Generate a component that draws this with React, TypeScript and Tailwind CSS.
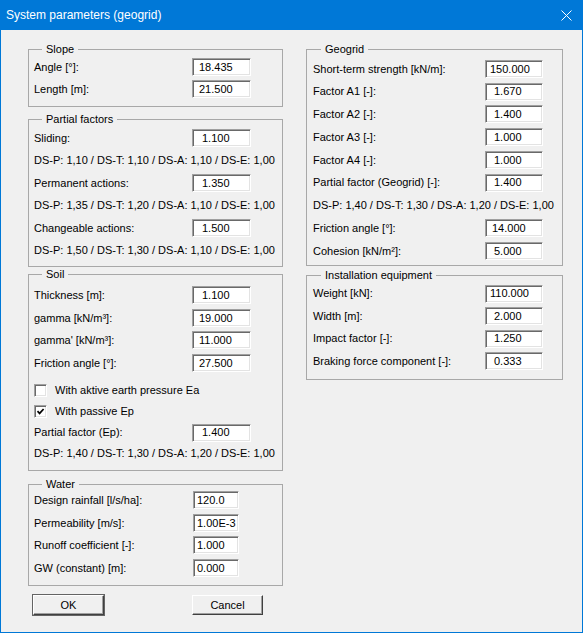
import type { ReactNode } from "react";

type RowProps = {
  label: string;
  value: string;
  pad: string;
  labelW: string;
  inputW: string;
  h?: string;
};

function Edit({ value, pad, inputW }: { value: string; pad: string; inputW: string }) {
  return (
    <div
      className={`flex h-[18px] items-center whitespace-pre border border-t-[#a0a0a0] border-l-[#a0a0a0] border-r-white border-b-white bg-white shadow-[inset_1px_1px_0_#696969,inset_-1px_-1px_0_#e3e3e3] ${inputW} ${pad}`}
    >
      {value}
    </div>
  );
}

function Row({ label, value, pad, labelW, inputW, h = "h-[22.5px]" }: RowProps) {
  return (
    <div className={`flex items-center ${h}`}>
      <span className={`shrink-0 whitespace-nowrap ${labelW}`}>{label}</span>
      <Edit value={value} pad={pad} inputW={inputW} />
    </div>
  );
}

function Note({ children, h = "h-[22.5px]" }: { children: ReactNode; h?: string }) {
  return <div className={`flex items-center whitespace-nowrap ${h}`}>{children}</div>;
}

function Check({ label, checked }: { label: string; checked?: boolean }) {
  return (
    <div className="flex h-[21px] items-center">
      <span className="flex h-[13px] w-[13px] items-center justify-center border border-t-[#a0a0a0] border-l-[#a0a0a0] border-r-white border-b-white bg-white shadow-[inset_1px_1px_0_#696969,inset_-1px_-1px_0_#e3e3e3]">
        {checked && (
          <svg width="9" height="9" viewBox="0 0 9 9">
            <path d="M1.5 4.2 L3.6 6.4 L7.6 2" fill="none" stroke="#000" strokeWidth="1.7" />
          </svg>
        )}
      </span>
      <span className="ml-[8px] whitespace-nowrap">{label}</span>
    </div>
  );
}

function Group({ title, className, children }: { title: string; className?: string; children: ReactNode }) {
  return (
    <fieldset className={`border border-[#a8a8a8] ${className ?? ""}`}>
      <legend className="ml-[8px] px-[4px] leading-[13px]">{title}</legend>
      {children}
    </fieldset>
  );
}

const LW = "w-[158px]";
const IW = "w-[59px]";
const RLW = "w-[172px]";
const RIW = "w-[58px]";

export default function App() {
  return (
    <div className="flex h-[633px] w-[583px] flex-col bg-[#0078d7] font-['Liberation_Sans',Arial,sans-serif] text-[11px] text-black">
      <div className="flex h-[30px] shrink-0 items-center justify-between pl-[6px] pr-[11px] text-[12px] text-white">
        <span>System parameters (geogrid)</span>
        <svg width="11" height="11" viewBox="0 0 11 11">
          <path d="M0.5 0.5 L10.5 10.5 M10.5 0.5 L0.5 10.5" stroke="#fff" strokeWidth="1" />
        </svg>
      </div>

      <div className="mx-[1px] mb-[1px] flex flex-1 gap-[23px] bg-[#f0f0f0] pl-[27px] pt-[12.5px]">
        {/* left column */}
        <div className="flex w-[255px] flex-col">
          <Group title="Slope" className="pl-[5px] pb-[5px]">
            <Row label="Angle [°]:" value="18.435" pad="pl-[6px]" labelW={LW} inputW={IW} />
            <Row label="Length [m]:" value="21.500" pad="pl-[6px]" labelW={LW} inputW={IW} />
          </Group>

          <Group title="Partial factors" className="mt-[6px] pl-[5px] pt-[1px] pb-[4.5px]">
            <Row label="Sliding:" value="1.100" pad="pl-[9px]" labelW={LW} inputW={IW} />
            <Note>DS-P: 1,10 / DS-T: 1,10 / DS-A: 1,10 / DS-E: 1,00</Note>
            <Row label="Permanent actions:" value="1.350" pad="pl-[9px]" labelW={LW} inputW={IW} />
            <Note>DS-P: 1,35 / DS-T: 1,20 / DS-A: 1,10 / DS-E: 1,00</Note>
            <Row label="Changeable actions:" value="1.500" pad="pl-[9px]" labelW={LW} inputW={IW} />
            <Note>DS-P: 1,50 / DS-T: 1,30 / DS-A: 1,10 / DS-E: 1,00</Note>
          </Group>

          <Group title="Soil" className="mt-[1px] pl-[5px] pt-[3px] pb-[5.5px]">
            <Row label="Thickness [m]:" value="1.100" pad="pl-[9px]" labelW={LW} inputW={IW} />
            <Row label="gamma [kN/m³]:" value="19.000" pad="pl-[6px]" labelW={LW} inputW={IW} />
            <Row label="gamma' [kN/m³]:" value="11.000" pad="pl-[6px]" labelW={LW} inputW={IW} />
            <Row label="Friction angle [°]:" value="27.500" pad="pl-[6px]" labelW={LW} inputW={IW} />
            <div className="mt-[6px]">
              <Check label="With aktive earth pressure Ea" />
              <Check label="With passive Ep" checked />
            </div>
            <Row label="Partial factor (Ep):" value="1.400" pad="pl-[9px]" labelW={LW} inputW={IW} h="h-[21px]" />
            <Note h="h-[21px]">DS-P: 1,40 / DS-T: 1,30 / DS-A: 1,20 / DS-E: 1,00</Note>
          </Group>

          <Group title="Water" className="mt-[7.5px] pl-[5px] pb-[6px]">
            <div className="-mt-[2px]">
              <Row label="Design rainfall [l/s/ha]:" value="120.0" pad="pl-[3px]" labelW="w-[159px]" inputW="w-[46px]" />
              <Row label="Permeability [m/s]:" value="1.00E-3" pad="pl-[3px]" labelW="w-[159px]" inputW="w-[46px]" />
              <Row label="Runoff coefficient [-]:" value="1.000" pad="pl-[3px]" labelW="w-[159px]" inputW="w-[46px]" />
              <Row label="GW (constant) [m]:" value="0.000" pad="pl-[3px]" labelW="w-[159px]" inputW="w-[46px]" />
            </div>
          </Group>

          <div className="mt-[9px] flex pl-[5px]">
            <button className="flex h-[20px] w-[71px] items-center justify-center border border-t-white border-l-white border-r-[#404040] border-b-[#404040] bg-[#f0f0f0] shadow-[inset_-1px_-1px_0_#a0a0a0,0_0_0_1px_#646464]">
              OK
            </button>
            <button className="ml-[88px] flex h-[20px] w-[71px] items-center justify-center border border-t-white border-l-white border-r-[#404040] border-b-[#404040] bg-[#f0f0f0] shadow-[inset_-1px_-1px_0_#a0a0a0]">
              Cancel
            </button>
          </div>
        </div>

        {/* right column */}
        <div className="flex w-[257px] flex-col">
          <Group title="Geogrid" className="pl-[6px] pt-[2px] pb-[3px]">
            <Row label="Short-term strength [kN/m]:" value="150.000" pad="pl-[4px]" labelW={RLW} inputW={RIW} h="h-[22.75px]" />
            <Row label="Factor A1 [-]:" value="1.670" pad="pl-[8px]" labelW={RLW} inputW={RIW} h="h-[22.75px]" />
            <Row label="Factor A2 [-]:" value="1.400" pad="pl-[8px]" labelW={RLW} inputW={RIW} h="h-[22.75px]" />
            <Row label="Factor A3 [-]:" value="1.000" pad="pl-[8px]" labelW={RLW} inputW={RIW} h="h-[22.75px]" />
            <Row label="Factor A4 [-]:" value="1.000" pad="pl-[8px]" labelW={RLW} inputW={RIW} h="h-[22.75px]" />
            <Row label="Partial factor (Geogrid) [-]:" value="1.400" pad="pl-[8px]" labelW={RLW} inputW={RIW} h="h-[22.75px]" />
            <Note h="h-[22.75px]">DS-P: 1,40 / DS-T: 1,30 / DS-A: 1,20 / DS-E: 1,00</Note>
            <Row label="Friction angle [°]:" value="14.000" pad="pl-[6px]" labelW={RLW} inputW={RIW} h="h-[22.75px]" />
            <Row label="Cohesion [kN/m²]:" value="5.000" pad="pl-[8px]" labelW={RLW} inputW={RIW} h="h-[22.75px]" />
          </Group>

          <Group title="Installation equipment" className="mt-[3px] pl-[6px] pb-[7px]">
            <Row label="Weight [kN]:" value="110.000" pad="pl-[4px]" labelW={RLW} inputW={RIW} />
            <Row label="Width [m]:" value="2.000" pad="pl-[8px]" labelW={RLW} inputW={RIW} />
            <Row label="Impact factor [-]:" value="1.250" pad="pl-[8px]" labelW={RLW} inputW={RIW} />
            <Row label="Braking force component [-]:" value="0.333" pad="pl-[8px]" labelW={RLW} inputW={RIW} />
          </Group>
        </div>
      </div>
    </div>
  );
}
